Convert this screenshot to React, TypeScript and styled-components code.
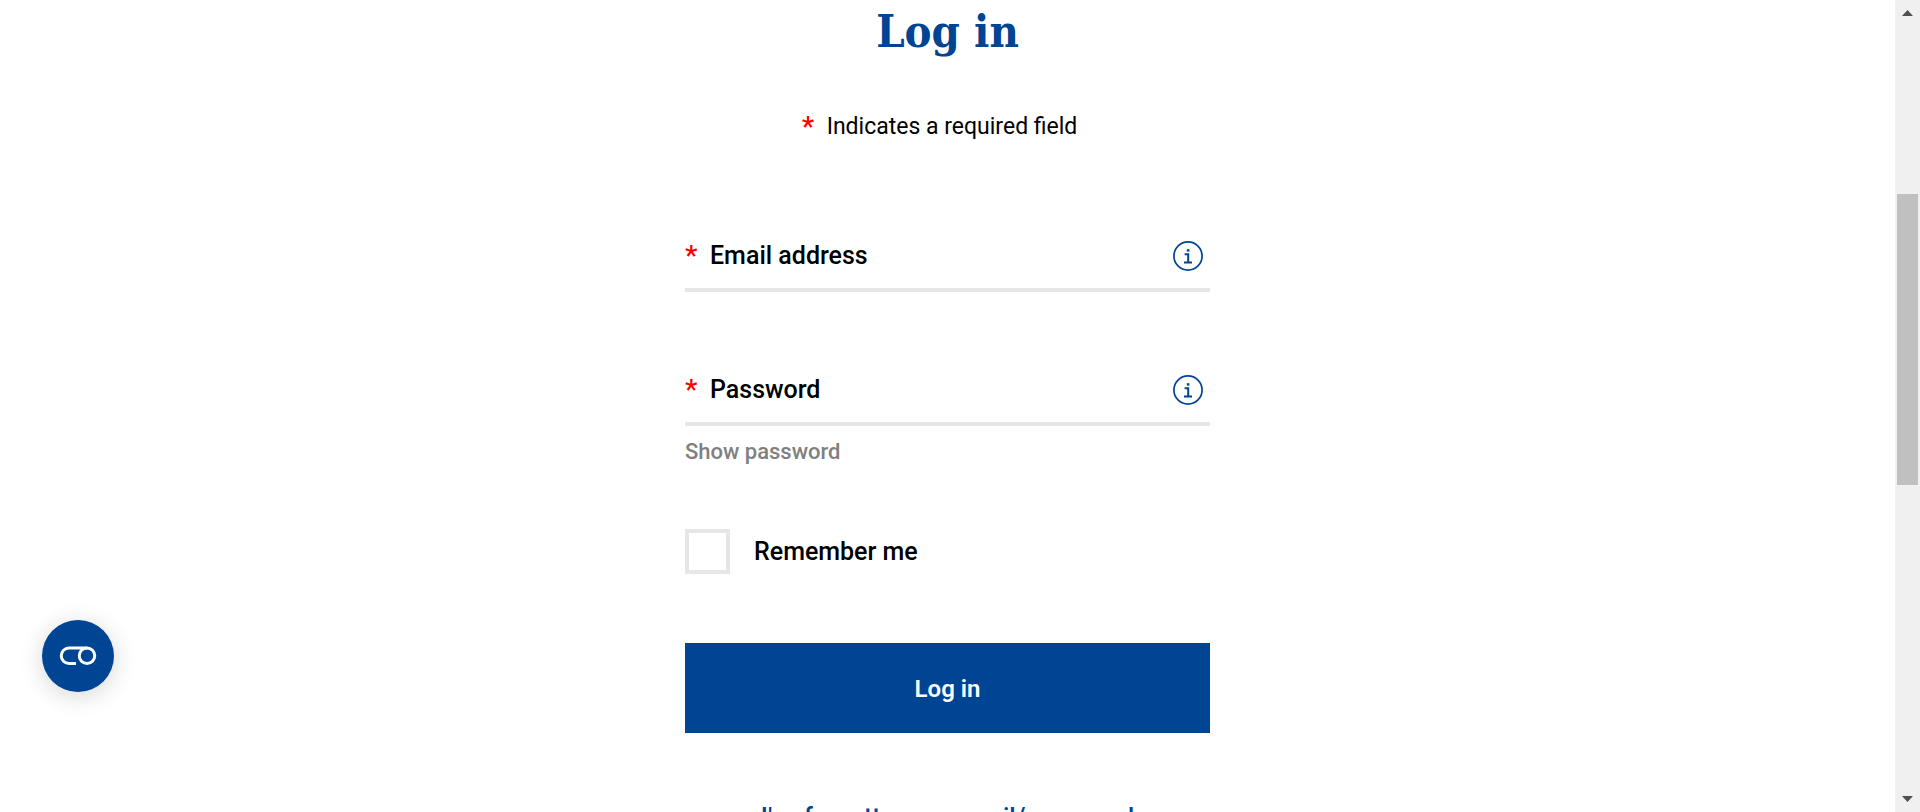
import React from "react";
import styled, { createGlobalStyle } from "styled-components";

const blue = "#004494";
const line = "#e6e6e6";

const GlobalStyle = createGlobalStyle`
  *, *::before, *::after { box-sizing: border-box; }
  html, body, #root { height: 100%; }
  body {
    margin: 0;
    overflow: hidden;
    background: #fff;
    color: #000;
    font: 24px/36px Roboto, "Liberation Sans", sans-serif;
  }
  button, input { font: inherit; }
`;

const Shell = styled.div`
  display: flex;
  height: 100%;
  overflow: hidden;
`;

const Page = styled.main`
  flex: 1;
  min-width: 0;
  overflow: hidden;
`;

const Form = styled.form`
  display: flex;
  flex-direction: column;
  width: 100%;
  max-width: 525px;
  margin: 0 auto;
`;

const Title = styled.h1`
  margin: 0;
  text-align: center;
  color: ${blue};
  font: bold 45px/64px "DejaVu Serif Condensed", "DejaVu Serif", serif;
  font-stretch: condensed;
`;

const Star = styled.span`
  flex: none;
  width: 25px;
  color: #f00;
  font-size: 28px;
  font-weight: 500;
`;

const Note = styled.p`
  display: flex;
  justify-content: center;
  margin: 45px 0 0;
  padding-right: 16px;
  font-size: 23px;
`;

const Field = styled.div`
  display: grid;
  grid-template-columns: 1fr auto;
  align-items: center;
  height: 72px;
  margin-top: ${(p: { $gap: number }) => p.$gap}px;
  padding: 4px 7px 0 0;
  border-bottom: 4px solid ${line};
`;

const Label = styled.label`
  display: flex;
  grid-area: 1 / 1;
  font-size: 25px;
  font-weight: 500;
`;

const Input = styled.input`
  grid-area: 1 / 1;
  width: 100%;
  height: 60px;
  padding: 0 0 0 190px;
  border: 0;
  outline: 0;
  background: transparent;
`;

const InfoButton = styled.button`
  display: flex;
  padding: 0;
  border: 0;
  background: none;
  color: ${blue};
`;

const ShowPassword = styled.button`
  align-self: flex-start;
  margin-top: 8px;
  padding: 0;
  border: 0;
  background: none;
  color: #808080;
  font-size: 22px;
  font-weight: 500;
`;

const Remember = styled.label`
  display: flex;
  align-items: center;
  gap: 24px;
  margin-top: 59px;
  font-size: 25px;
  font-weight: 500;
`;

const Checkbox = styled.input`
  appearance: none;
  width: 45px;
  height: 45px;
  margin: 0;
  border: 4px solid ${line};
  background: #fff;
  &:checked { background: ${blue}; }
`;

const Submit = styled.button`
  height: 90px;
  margin-top: 69px;
  padding: 2px 0 0;
  border: 0;
  background: ${blue};
  color: #fff;
  font-weight: 600;
`;

const Forgotten = styled.a`
  align-self: center;
  margin-top: 67px;
  color: ${blue};
  font-size: 25px;
  font-weight: 500;
  text-decoration: none;
  white-space: nowrap;
`;

const Preferences = styled.button`
  position: fixed;
  left: 42px;
  bottom: 120px;
  display: flex;
  align-items: center;
  justify-content: center;
  width: 72px;
  height: 72px;
  padding: 0;
  border: 0;
  border-radius: 50%;
  background: ${blue};
  color: #fff;
  box-shadow: 0 4px 24px rgba(0, 0, 0, 0.16);
`;

const Track = styled.div`
  display: flex;
  flex: none;
  flex-direction: column;
  align-items: center;
  width: 25px;
  background: #f0f0f0;
`;

const Arrow = styled.svg`
  flex: none;
  width: 25px;
  height: 25px;
  fill: #505050;
`;

const Rail = styled.div`
  display: flex;
  flex: 1;
  flex-direction: column;
  width: 21px;
`;

const Space = styled.div`
  flex: ${(p: { $share: number }) => p.$share} 0 0;
`;

const Thumb = styled.div`
  flex: 291 0 0;
  background: #c0c0c0;
`;

function Info({ label }: { label: string }) {
  return (
    <InfoButton type="button" aria-label={label}>
      <svg width="30" height="30" viewBox="0 0 30 30" fill="none" stroke="currentColor">
        <circle cx="15" cy="15" r="14.1" strokeWidth="1.7" />
        <path d="M11.6 13.2h3.6v8.2M11 21.4h8" strokeWidth="2" />
        <path d="M13.8 8.2h2.6v2.4H13.8z" fill="currentColor" stroke="none" />
      </svg>
    </InfoButton>
  );
}

export default function App() {
  return (
    <Shell>
      <GlobalStyle />
      <Page>
        <Form onSubmit={(e) => e.preventDefault()}>
          <Title>Log in</Title>
          <Note>
            <Star>*</Star>Indicates a required field
          </Note>
          <Field $gap={75}>
            <Label htmlFor="email"><Star>*</Star>Email address</Label>
            <Input id="email" type="email" />
            <Info label="About the email address" />
          </Field>
          <Field $gap={62}>
            <Label htmlFor="password"><Star>*</Star>Password</Label>
            <Input id="password" type="password" />
            <Info label="About the password" />
          </Field>
          <ShowPassword type="button">Show password</ShowPassword>
          <Remember>
            <Checkbox type="checkbox" />
            Remember me
          </Remember>
          <Submit type="submit">Log in</Submit>
          <Forgotten href="#forgotten">I've forgotten my email/password</Forgotten>
        </Form>
      </Page>
      <Preferences type="button" aria-label="Cookie preferences">
        <svg width="38" height="20" viewBox="0 0 38 20" fill="none" stroke="currentColor" strokeWidth="3">
          <path d="M17 17.5H10a7.75 7.75 0 0 1 0-15.5H28" />
          <circle cx="28" cy="9.75" r="7.75" />
        </svg>
      </Preferences>
      <Track aria-hidden="true">
        <Arrow viewBox="0 0 25 25"><path d="M7 16h11l-5.5-6z" /></Arrow>
        <Rail>
          <Space $share={169} />
          <Thumb />
          <Space $share={302} />
        </Rail>
        <Arrow viewBox="0 0 25 25"><path d="M7 9h11l-5.5 6z" /></Arrow>
      </Track>
    </Shell>
  );
}
